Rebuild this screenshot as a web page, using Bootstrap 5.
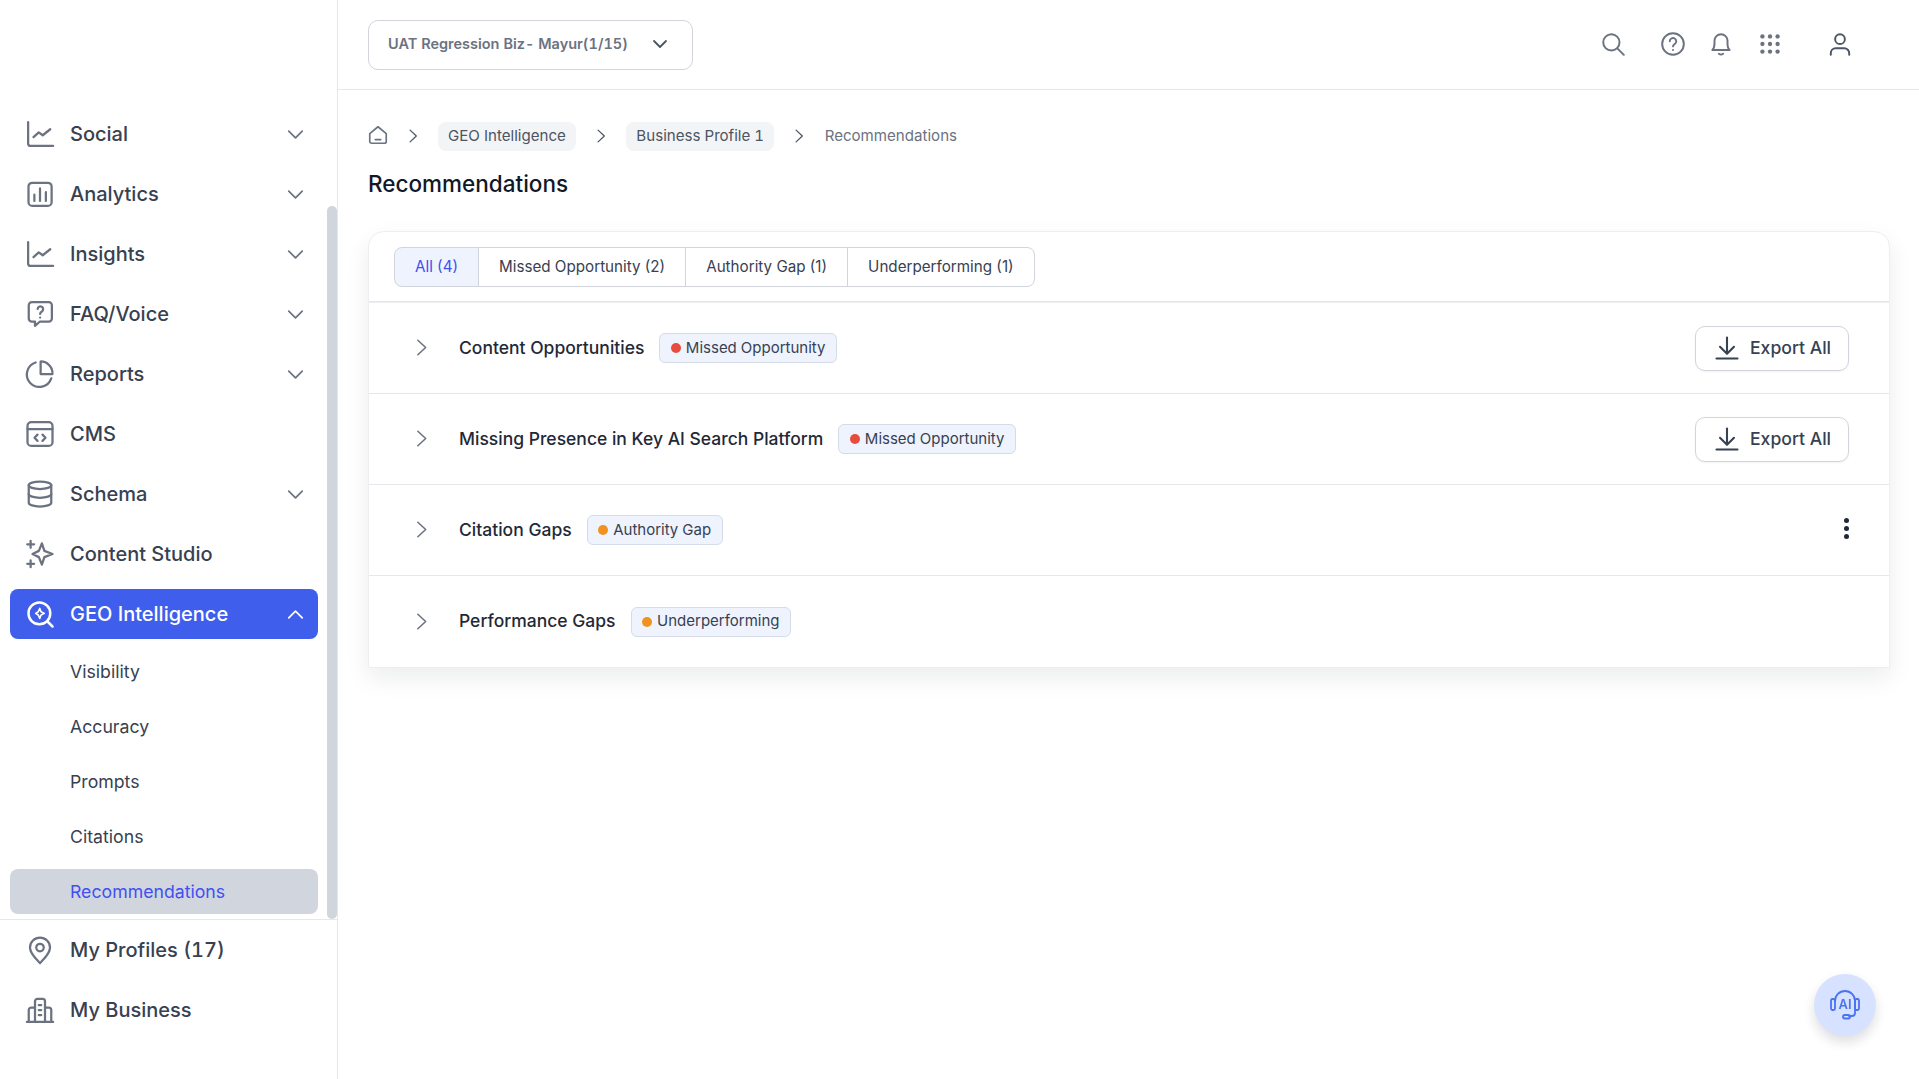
<!DOCTYPE html>
<html lang="en">
<head>
  <meta charset="UTF-8" />
  <meta name="viewport" content="width=device-width, initial-scale=1.0"/>
  <title>Recommendations - GEO Intelligence</title>
  <link href="https://cdn.jsdelivr.net/npm/bootstrap@5.3.0/dist/css/bootstrap.min.css" rel="stylesheet" />
  <style>
    html, body { height: 100%; }
    body { font-family: Inter, "Liberation Sans", sans-serif; font-variant-numeric: tabular-nums; background: #fff; color: #374151; overflow: hidden; }
    svg { display: block; flex: none; fill: none; stroke: currentColor; stroke-width: 1.8; stroke-linecap: round; stroke-linejoin: round; }
    .app-shell { height: 1079px; }

    /* sidebar */
    .side-panel { width: 338px; flex: none; border-right: 1px solid #e5e7eb; position: relative; }
    .side-scroll { padding: 109px 19px 0 10px; height: 920px; border-bottom: 1px solid #e5e7eb; }
    .side-foot { padding: 5px 19px 0 10px; }
    .side-link { height: 50px; padding: 0 9px 0 15px; margin-bottom: 10px; border-radius: 8px; color: #374151; font-size: 20px; font-weight: 450; gap: 15px; }
    .side-link:hover { color: #374151; }
    .side-link .ico-main { width: 30px; height: 30px; color: #6b7280; }
    .side-link .ico-chev { width: 27px; height: 27px; color: #6b7280; margin-left: auto; stroke-width: 1.5; }
    .side-link.is-open { background: #3f5eec; color: #fff; }
    .side-link.is-open .ico-main, .side-link.is-open .ico-chev { color: #fff; }
    .side-sub { height: 45px; padding: 1px 0 0 60px; margin-bottom: 10px; border-radius: 8px; color: #374151; font-size: 17.7px; }
    .side-sub.is-current { background: #d1d5de; color: #3f51f0; margin-bottom: 0; }
    .side-thumb { position: absolute; left: 327px; top: 206px; width: 10px; height: 713px; background: #d1d5de; border-radius: 5px; }

    /* top bar */
    .top-bar { height: 90px; border-bottom: 1px solid #e5e7eb; padding: 0 30px; }
    .biz-select { width: 325px; height: 50px; border: 1px solid #d1d5db; border-radius: 10px; padding: 0 20px 2px 19px; color: #6b7280; font-size: 14.5px; font-weight: 600; }
    .biz-select svg { width: 24px; height: 24px; color: #4b5563; }
    .top-ico { color: #6b7280; width: 26px; height: 26px; }
    .top-icons { margin-top: -2px; margin-right: 36px; }

    /* content */
    .page-body { padding: 32px 29px 0 30px; }
    .crumb-row { height: 29px; color: #4b5563; font-size: 15.1px; }
    .crumb-home { color: #6b7280; width: 22px; height: 22px; margin: -3px 0 0 -1px; }
    .crumb-chip { background: #f3f4f6; border-radius: 8px; padding: 0 10px; height: 29px; display: flex; align-items: center; }
    .crumb-chev { width: 20px; height: 20px; color: #4b5563; margin: -1px 15.500px 0 15px; stroke-width: 1.5; }
    .crumb-chev.after-home { margin: -1px 15px 0 14px; }
    .crumb-last { color: #6b7280; }
    .page-title { font-size: 22.5px; font-weight: 500; color: #111827; margin: 16px 0 31px; line-height: 33px; }

    .rec-card { border: 1px solid #eceef1; border-radius: 16px 16px 0 0; box-shadow: 0 10px 25px rgba(17, 24, 39, .08); }
    .rec-head { height: 70px; padding: 15px 25px 0; border-bottom: 1px solid #e5e7eb; }
    .rec-tabs .btn { --bs-btn-border-color: #d1d5db; height: 40px; padding: 0 20px; font-size: 15.2px; font-weight: 400; color: #374151; background: #fff; border-radius: 8px; }
    .rec-tabs .btn.is-active { color: #3f51f0; background: #eef3fe; }
    .rec-row { height: 91px; padding: 0 40px 0 40px; border-color: #e5e7eb; }
    .rec-chev { width: 25px; height: 25px; color: #6b7280; margin: -1px 25px 0 0; stroke-width: 1.5; }
    .rec-name { font-size: 17.5px; font-weight: 450; color: #1f2937; margin-right: 15px; }
    .rec-tag { height: 30px; padding: 0 10.500px; background: #eff3fd; border: 1px solid #d5dbe7; border-radius: 6px; font-size: 15px; color: #374151; gap: 5px; }
    .tag-dot { width: 10px; height: 10px; border-radius: 50%; }
    .dot-red { background: #e74c3c; }
    .dot-amber { background: #ef9220; }
    .export-btn { height: 45px; width: 154px; --bs-btn-border-color: #d1d5db; --bs-btn-border-radius: 10px; font-size: 17.6px; font-weight: 500; color: #374151; background: #fff; box-shadow: 0 1px 2px rgba(17, 24, 39, .05); gap: 9px; padding: 0; }
    .export-btn svg { width: 28px; height: 28px; }
    .more-dots { gap: 3px; width: 6px; margin-right: -1px; margin-top: -3px; }
    .more-dots i { display: block; width: 5px; height: 5px; background: #1f2937; border-radius: 50%; }

    .ai-fab { position: fixed; left: 1814px; top: 974px; width: 62px; height: 62px; border-radius: 50%; background: #d6e2ff; color: #4a73f2; box-shadow: 0 6px 12px rgba(17, 24, 39, .14); }
    .ai-fab span { position: absolute; left: 0; right: 0; top: 22px; text-align: center; font-size: 13px; line-height: 16px; font-weight: 600; }
  </style>
</head>

<body>
  <svg width="0" height="0" style="position:absolute">
    <symbol id="i-line" viewBox="0 0 24 24"><path d="M2.500 2.500v17a2 2 0 0 0 2 2h18"/><path d="M6.800 14.500l4.200-3.800 3.200 2.300 6-4.800"/></symbol>
    <symbol id="i-bars" viewBox="0 0 24 24"><rect x="2.800" y="3" width="18.500" height="18.500" rx="3"/><path d="M7.500 17.500v-5M12 17.500V7.500M16.700 17.500v-7"/></symbol>
    <symbol id="i-faq" viewBox="0 0 24 24"><path d="M5.500 2.500h13.500a2.500 2.500 0 0 1 2.500 2.500v10.500a2.500 2.500 0 0 1-2.500 2.500h-7l-4 3.500v-3.500H5.500a2.500 2.500 0 0 1-2.500-2.500V5a2.500 2.500 0 0 1 2.500-2.500z"/><path d="M10.100 8a2.200 2.200 0 1 1 3.400 2c-.9.500-1.400 1-1.400 1.900"/><path d="M12.100 14.800h.01"/></symbol>
    <symbol id="i-pie" viewBox="0 0 24 24"><path d="M21 15.500A10 10 0 1 1 8.500 2.800"/><path d="M12.500 2a9.500 9.500 0 0 1 9.500 10h-9.500z"/></symbol>
    <symbol id="i-cms" viewBox="0 0 24 24"><rect x="2" y="2.500" width="20" height="19" rx="3"/><path d="M2 8h20"/><path d="M10 12.500l-2.400 2.500 2.400 2.500M14 12.500l2.400 2.500-2.400 2.500"/></symbol>
    <symbol id="i-db" viewBox="0 0 24 24"><ellipse cx="12" cy="5" rx="9" ry="3"/><path d="M3 5v14c0 1.700 4 3 9 3s9-1.300 9-3V5"/><path d="M3 12c0 1.700 4 3 9 3s9-1.300 9-3"/></symbol>
    <symbol id="i-spark" viewBox="0 0 24 24"><path d="M13.500 3.500l2 6 6.500 2.500-6.500 2.500-2 6-2.400-6L6 12l5.100-2.500z"/><path d="M4.500 1.500v5.500M1.800 4.200h5.500M4.500 17v5.500M1.800 19.800h5.500"/></symbol>
    <symbol id="i-geo" viewBox="0 0 24 24"><circle cx="11.500" cy="11.500" r="8.700" stroke-width="2"/><path d="M18 18l4 4" stroke-width="2"/><path d="M11.800 7.500l1 2.700 2.700 1.300-2.700 1.300-1 2.700-1.200-2.700-2.100-1.300 2.100-1.300z" stroke-width="1.300"/></symbol>
    <symbol id="i-pin" viewBox="0 0 24 24"><path d="M12 22.500c-1-1.700-8-6.800-8-12.500a8 8 0 0 1 16 0c0 5.700-7 10.800-8 12.500z"/><circle cx="12" cy="10" r="3"/></symbol>
    <symbol id="i-biz" viewBox="0 0 24 24"><path d="M1.500 21.500h21"/><path d="M8 21.500V5a2 2 0 0 1 2-2h4a2 2 0 0 1 2 2v16.500"/><path d="M8 10H5a2 2 0 0 0-2 2v9.500M16 10h3a2 2 0 0 1 2 2v9.500"/><path d="M11 8h2M11 12h2M11 16h2"/></symbol>
    <symbol id="i-down" viewBox="0 0 24 24"><path d="M6 9l6 6 6-6"/></symbol>
    <symbol id="i-up" viewBox="0 0 24 24"><path d="M6 15l6-6 6 6"/></symbol>
    <symbol id="i-right" viewBox="0 0 24 24"><path d="M8.500 5l7.500 7-7.500 7"/></symbol>
  </svg>

  <div class="app-shell d-flex">
    <aside class="side-panel">
      <nav class="side-scroll nav flex-column flex-nowrap">
        <a href="#" class="side-link nav-link d-flex align-items-center"><svg class="ico-main"><use href="#i-line"/></svg>Social<svg class="ico-chev"><use href="#i-down"/></svg></a>
        <a href="#" class="side-link nav-link d-flex align-items-center"><svg class="ico-main"><use href="#i-bars"/></svg>Analytics<svg class="ico-chev"><use href="#i-down"/></svg></a>
        <a href="#" class="side-link nav-link d-flex align-items-center"><svg class="ico-main"><use href="#i-line"/></svg>Insights<svg class="ico-chev"><use href="#i-down"/></svg></a>
        <a href="#" class="side-link nav-link d-flex align-items-center"><svg class="ico-main"><use href="#i-faq"/></svg>FAQ/Voice<svg class="ico-chev"><use href="#i-down"/></svg></a>
        <a href="#" class="side-link nav-link d-flex align-items-center"><svg class="ico-main"><use href="#i-pie"/></svg>Reports<svg class="ico-chev"><use href="#i-down"/></svg></a>
        <a href="#" class="side-link nav-link d-flex align-items-center"><svg class="ico-main"><use href="#i-cms"/></svg>CMS</a>
        <a href="#" class="side-link nav-link d-flex align-items-center"><svg class="ico-main"><use href="#i-db"/></svg>Schema<svg class="ico-chev"><use href="#i-down"/></svg></a>
        <a href="#" class="side-link nav-link d-flex align-items-center"><svg class="ico-main"><use href="#i-spark"/></svg>Content Studio</a>
        <a href="#" class="side-link nav-link d-flex align-items-center is-open"><svg class="ico-main"><use href="#i-geo"/></svg>GEO Intelligence<svg class="ico-chev"><use href="#i-up"/></svg></a>
        <a href="#" class="side-sub nav-link d-flex align-items-center">Visibility</a>
        <a href="#" class="side-sub nav-link d-flex align-items-center">Accuracy</a>
        <a href="#" class="side-sub nav-link d-flex align-items-center">Prompts</a>
        <a href="#" class="side-sub nav-link d-flex align-items-center">Citations</a>
        <a href="#" class="side-sub nav-link d-flex align-items-center is-current">Recommendations</a>
      </nav>
      <div class="side-thumb"></div>
      <div class="side-foot nav flex-column">
        <a href="#" class="side-link nav-link d-flex align-items-center"><svg class="ico-main"><use href="#i-pin"/></svg>My Profiles (17)</a>
        <a href="#" class="side-link nav-link d-flex align-items-center"><svg class="ico-main"><use href="#i-biz"/></svg>My Business</a>
      </div>
    </aside>

    <div class="flex-grow-1 min-w-0">
      <header class="top-bar d-flex align-items-center">
        <div class="biz-select d-flex align-items-center justify-content-between">UAT Regression Biz- Mayur(1/15)<svg><use href="#i-down"/></svg></div>
        <div class="top-icons ms-auto d-flex align-items-center">
          <svg class="top-ico" viewBox="0 0 24 24"><circle cx="10.500" cy="10.500" r="7.500"/><path d="M16 16l6 6"/></svg>
          <svg class="top-ico" style="margin-left:34px" viewBox="0 0 24 24"><circle cx="12" cy="12" r="10"/><path d="M9 9.500a3 3 0 1 1 4.500 2.600c-1 .6-1.500 1.200-1.500 2.100"/><path d="M12 17.500h.01"/></svg>
          <svg class="top-ico" style="margin-left:22px" viewBox="0 0 24 24"><path d="M4 17.500c1-.8 2-1.800 2-6V9a6 6 0 0 1 12 0v2.500c0 4.200 1 5.200 2 6z"/><path d="M10 21c1.200.8 2.800.8 4 0"/></svg>
          <svg class="top-ico" style="margin-left:23px" viewBox="0 0 24 24"><g fill="currentColor" stroke="none"><circle cx="5" cy="5" r="2"/><circle cx="12" cy="5" r="2"/><circle cx="19" cy="5" r="2"/><circle cx="5" cy="12" r="2"/><circle cx="12" cy="12" r="2"/><circle cx="19" cy="12" r="2"/><circle cx="5" cy="19" r="2"/><circle cx="12" cy="19" r="2"/><circle cx="19" cy="19" r="2"/></g></svg>
          <svg class="top-ico" style="margin-left:44px;color:#4b5563" viewBox="0 0 24 24"><circle cx="12" cy="7.500" r="4.500"/><path d="M3.500 22v-1.500a4.500 4.500 0 0 1 4.500-4.500h8a4.500 4.500 0 0 1 4.500 4.500V22"/></svg>
        </div>
      </header>

      <main class="page-body">
        <div class="crumb-row d-flex align-items-center">
          <svg class="crumb-home" viewBox="0 0 24 24"><path d="M3 10.500L12 3l9 7.500V19a2 2 0 0 1-2 2H5a2 2 0 0 1-2-2z"/><path d="M9 17h6"/></svg>
          <svg class="crumb-chev after-home"><use href="#i-right"/></svg>
          <span class="crumb-chip">GEO Intelligence</span>
          <svg class="crumb-chev"><use href="#i-right"/></svg>
          <span class="crumb-chip">Business Profile 1</span>
          <svg class="crumb-chev"><use href="#i-right"/></svg>
          <span class="crumb-last">Recommendations</span>
        </div>
        <h1 class="page-title">Recommendations</h1>

        <div class="rec-card card">
          <div class="rec-head">
            <div class="rec-tabs btn-group" role="group">
              <button type="button" class="btn is-active">All (4)</button>
              <button type="button" class="btn">Missed Opportunity (2)</button>
              <button type="button" class="btn">Authority Gap (1)</button>
              <button type="button" class="btn">Underperforming (1)</button>
            </div>
          </div>
          <div class="list-group list-group-flush">
            <div class="rec-row list-group-item d-flex align-items-center">
              <svg class="rec-chev"><use href="#i-right"/></svg>
              <span class="rec-name">Content Opportunities</span>
              <span class="rec-tag d-inline-flex align-items-center"><i class="tag-dot dot-red"></i>Missed Opportunity</span>
              <button type="button" class="export-btn btn ms-auto d-flex align-items-center justify-content-center"><svg viewBox="0 0 24 24"><path d="M12 3v13M6 11l6 6 6-6M3 21h18"/></svg>Export All</button>
            </div>
            <div class="rec-row list-group-item d-flex align-items-center">
              <svg class="rec-chev"><use href="#i-right"/></svg>
              <span class="rec-name">Missing Presence in Key AI Search Platform</span>
              <span class="rec-tag d-inline-flex align-items-center"><i class="tag-dot dot-red"></i>Missed Opportunity</span>
              <button type="button" class="export-btn btn ms-auto d-flex align-items-center justify-content-center"><svg viewBox="0 0 24 24"><path d="M12 3v13M6 11l6 6 6-6M3 21h18"/></svg>Export All</button>
            </div>
            <div class="rec-row list-group-item d-flex align-items-center">
              <svg class="rec-chev"><use href="#i-right"/></svg>
              <span class="rec-name">Citation Gaps</span>
              <span class="rec-tag d-inline-flex align-items-center"><i class="tag-dot dot-amber"></i>Authority Gap</span>
              <div class="more-dots ms-auto d-flex flex-column"><i></i><i></i><i></i></div>
            </div>
            <div class="rec-row list-group-item d-flex align-items-center">
              <svg class="rec-chev"><use href="#i-right"/></svg>
              <span class="rec-name">Performance Gaps</span>
              <span class="rec-tag d-inline-flex align-items-center"><i class="tag-dot dot-amber"></i>Underperforming</span>
            </div>
          </div>
        </div>
      </main>
    </div>
  </div>

  <div class="ai-fab">
    <svg width="62" height="62" viewBox="0 0 62 62" stroke-width="2.200"><path d="M21 27a10 10 0 0 1 10-10a10 10 0 0 1 10 10v12a3 3 0 0 1-3 3h-3"/><rect x="17" y="25" width="4" height="11" rx="1.500"/><rect x="41" y="25" width="4" height="11" rx="1.500"/><rect x="29" y="41" width="7" height="3.500" rx="1.700"/></svg>
    <span>AI</span>
  </div>

  <script src="https://cdn.jsdelivr.net/npm/bootstrap@5.3.0/dist/js/bootstrap.bundle.min.js"></script>
</body>
</html>
